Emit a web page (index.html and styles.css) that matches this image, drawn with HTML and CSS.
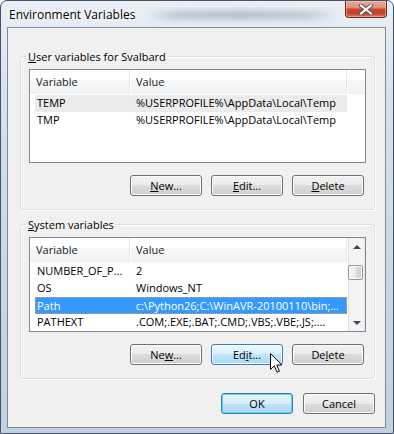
FILE: index.html
```html
<!DOCTYPE html>
<html lang="en">

<head>
    <meta charset="UTF-8">
    <title>Environment Variables</title>
    <link rel="stylesheet" href="styles.css">
</head>

<body>
    <div class="window">
        <div class="titlebar">
            <span class="title">Environment Variables</span>
            <span class="backdrop"></span>
            <button class="close" title="Close">
                <svg width="14" height="11" viewBox="0 0 14 11">
                    <path d="M2 1.5 L12 9.5 M12 1.5 L2 9.5" stroke="#4a4f57" stroke-width="4" stroke-linecap="square" />
                    <path d="M2 1.5 L12 9.5 M12 1.5 L2 9.5" stroke="#fff" stroke-width="2" stroke-linecap="square" />
                </svg>
            </button>
        </div>

        <div class="client">
            <!-- user variables -->
            <fieldset class="group">
                <legend><u>U</u>ser variables for Svalbard</legend>
                <div class="list list-user">
                    <div class="pane">
                        <div class="header">
                            <span class="h1">Variable</span>
                            <span class="h2">Value</span>
                        </div>
                        <div class="rows">
                            <div class="row hot"><span class="c1">TEMP</span><span class="c2">%USERPROFILE%\AppData\Local\Temp</span></div>
                            <div class="row"><span class="c1">TMP</span><span class="c2">%USERPROFILE%\AppData\Local\Temp</span></div>
                        </div>
                    </div>
                </div>
                <div class="buttons">
                    <button class="btn"><u>N</u>ew...</button>
                    <button class="btn"><u>E</u>dit...</button>
                    <button class="btn"><u>D</u>elete</button>
                </div>
            </fieldset>

            <!-- system variables -->
            <fieldset class="group group-system">
                <legend><u>S</u>ystem variables</legend>
                <div class="list list-system">
                    <div class="pane">
                        <div class="header">
                            <span class="h1">Variable</span>
                            <span class="h2">Value</span>
                        </div>
                        <div class="rows">
                            <div class="row"><span class="c1">NUMBER_OF_P…</span><span class="c2">2</span></div>
                            <div class="row"><span class="c1">OS</span><span class="c2">Windows_NT</span></div>
                            <div class="row selected"><span class="c1">Path</span><span class="c2">c:\Python26;C:\WinAVR-20100110\bin;…</span></div>
                            <div class="row"><span class="c1">PATHEXT</span><span class="c2">.COM;.EXE;.BAT;.CMD;.VBS;.VBE;.JS;.…</span></div>
                        </div>
                    </div>
                    <div class="scrollbar">
                        <div class="arrow"><span class="tri-up"></span></div>
                        <div class="track"><div class="thumb"></div></div>
                        <div class="arrow"><span class="tri-down"></span></div>
                    </div>
                </div>
                <div class="buttons">
                    <button class="btn">Ne<u>w</u>...</button>
                    <button class="btn hover">Ed<u>i</u>t...</button>
                    <button class="btn">De<u>l</u>ete</button>
                </div>
            </fieldset>

            <div class="buttons dialog-buttons">
                <button class="btn default">OK</button>
                <button class="btn">Cancel</button>
            </div>
        </div>

        <svg class="cursor" width="13" height="21" viewBox="0 0 13 21">
            <path d="M0.5 0.5 L0.5 16.5 L4.3 12.8 L7 19.2 L9.4 18.2 L6.8 12 L11.8 12 Z" fill="#fff" stroke="#000" stroke-width="1" stroke-linejoin="miter" />
        </svg>
    </div>
</body>

</html>
```

FILE: styles.css
```css
* {
    box-sizing: border-box;
}

body {
    margin: 0;
    background: #fff;
    font-family: "Open Sans", "Noto Sans", sans-serif;
    font-size: 11px;
    color: #000;
}

button {
    font-family: inherit;
    font-size: inherit;
    color: inherit;
}

.window {
    position: relative;
    width: 394px;
    height: 434px;
    display: flex;
    flex-direction: column;
    border: 1px solid #42536a;
    border-radius: 7px 7px 0 0;
    background: linear-gradient(180deg, #eaf0f6 0%, #d8e2ed 20%, #cad7e5 60%, #c2d0e0 100%);
    overflow: hidden;
}

/* title bar */

.titlebar {
    height: 26px;
    display: flex;
    align-items: flex-start;
    flex-shrink: 0;
}

.title {
    margin: 6px 0 0 8px;
    font-size: 12px;
    line-height: 15px;
    text-shadow: 0 0 6px #fff, 0 0 3px #fff;
}

.backdrop {
    width: 190px;
    height: 8px;
    margin: 10px 0 0 12px;
    border-radius: 4px;
    background: linear-gradient(90deg, rgba(130, 140, 152, 0), rgba(130, 140, 152, 0.45) 15%, rgba(120, 130, 142, 0.5) 50%, rgba(130, 140, 152, 0.4) 85%, rgba(130, 140, 152, 0));
    filter: blur(3px);
}

.close {
    margin-left: auto;
    margin-right: 6px;
    width: 42px;
    height: 17px;
    padding: 0;
    display: flex;
    align-items: center;
    justify-content: center;
    border: 1px solid #6e2b20;
    border-top: none;
    border-radius: 0 0 4px 4px;
    background: linear-gradient(180deg, #e8ab9b 0%, #dc9380 40%, #c6472f 52%, #c24129 75%, #d8795a 100%);
    box-shadow: inset 0 0 0 1px rgba(255, 210, 200, 0.45);
}

/* client area */

.client {
    flex: 1;
    margin: 0 7px 5px 6px;
    padding: 21px 10px 0 12px;
    border: 1px solid #7d8a97;
    background: #f0f0f0;
    display: flex;
    flex-direction: column;
}

.group {
    margin: 0;
    min-width: 0;
    padding: 5px 8px 13px 8px;
    border: 1px solid #d5dfe5;
    border-radius: 3px;
    box-shadow: inset 1px 1px 0 #fff, 1px 1px 0 #fff;
}

.group-system {
    margin-top: 7px;
}

.group legend {
    margin-left: -3px;
    padding: 0 2px;
    line-height: 15px;
}

/* list views */

.list {
    display: flex;
    border: 1px solid #828790;
    background: #fff;
}

.list-user {
    height: 94px;
}

.list-system {
    height: 95px;
}

.pane {
    flex: 1;
    overflow: hidden;
}

.header {
    display: flex;
    height: 24px;
    background: linear-gradient(180deg, #fff 0%, #fff 40%, #f6f7f9 40%, #f1f2f4 100%);
}

.list-user .header::after {
    content: "";
    flex: 1;
}

.header span {
    line-height: 23px;
    border-right: 1px solid #e3e6ea;
    box-shadow: 1px 0 0 #fff;
    color: #1a1a1a;
}

.h1 {
    width: 100px;
    padding-left: 6px;
}

.h2 {
    width: 217px;
    padding-left: 6px;
}

.rows {
    padding: 1px 0 0 5px;
}

.row {
    display: flex;
    width: 312px;
    height: 17px;
    line-height: 16px;
    white-space: nowrap;
}

.row.hot {
    background: #ebebeb;
}

.row.selected {
    background: #3399ff;
    color: #fff;
    border: 1px dotted #f39a3c;
}

.c1 {
    width: 95px;
    padding-left: 2px;
    overflow: hidden;
}

.c2 {
    width: 217px;
    padding-left: 6px;
    overflow: hidden;
}

.row.selected .c1 {
    width: 94px;
    padding-left: 1px;
}

/* scrollbar */

.scrollbar {
    width: 17px;
    display: flex;
    flex-direction: column;
    background: linear-gradient(90deg, #e2e2e2 0, #e2e2e2 1px, #f3f3f3 1px, #f3f3f3 16px, #e6e6e6 16px);
}

.arrow {
    height: 17px;
    display: flex;
    align-items: center;
    justify-content: center;
}

.tri-up {
    border-left: 4px solid transparent;
    border-right: 4px solid transparent;
    border-bottom: 4px solid #3b4a5a;
}

.tri-down {
    border-left: 4px solid transparent;
    border-right: 4px solid transparent;
    border-top: 4px solid #3b4a5a;
}

.track {
    flex: 1;
}

.thumb {
    margin: 10px 2px 0 0;
    height: 15px;
    border: 1px solid #979797;
    border-radius: 2px;
    background: linear-gradient(90deg, #f5f5f5 0%, #ececec 50%, #dcdcdc 50%, #d4d4d4 100%);
    box-shadow: inset 0 0 0 1px #fbfbfb;
}

/* buttons */

.buttons {
    display: flex;
    justify-content: flex-end;
    gap: 9px;
    margin-top: 12px;
    padding-right: 2px;
}

.dialog-buttons {
    margin-top: 14px;
    padding-right: 0;
    gap: 10px;
}

.btn {
    width: 72px;
    height: 21px;
    padding: 0;
    line-height: 17px;
    border: 1px solid #707070;
    border-radius: 3px;
    background: linear-gradient(180deg, #f2f2f2 0%, #ebebeb 50%, #dddddd 50%, #cfcfcf 100%);
    box-shadow: inset 0 0 0 1px #fcfcfc;
}

.btn.hover {
    border-color: #3c7fb1;
    background: linear-gradient(180deg, #eaf6fd 0%, #d9f0fc 50%, #bee6fd 50%, #a7d9f5 100%);
}

.btn.default {
    border-color: #3c7fb1;
    background: linear-gradient(180deg, #e6f4fc 0%, #d6eefb 50%, #c0e3f8 50%, #aed9f3 100%);
    box-shadow: inset 0 0 0 1px #5bd0f6;
}

.cursor {
    position: absolute;
    left: 269px;
    top: 352px;
}
```
